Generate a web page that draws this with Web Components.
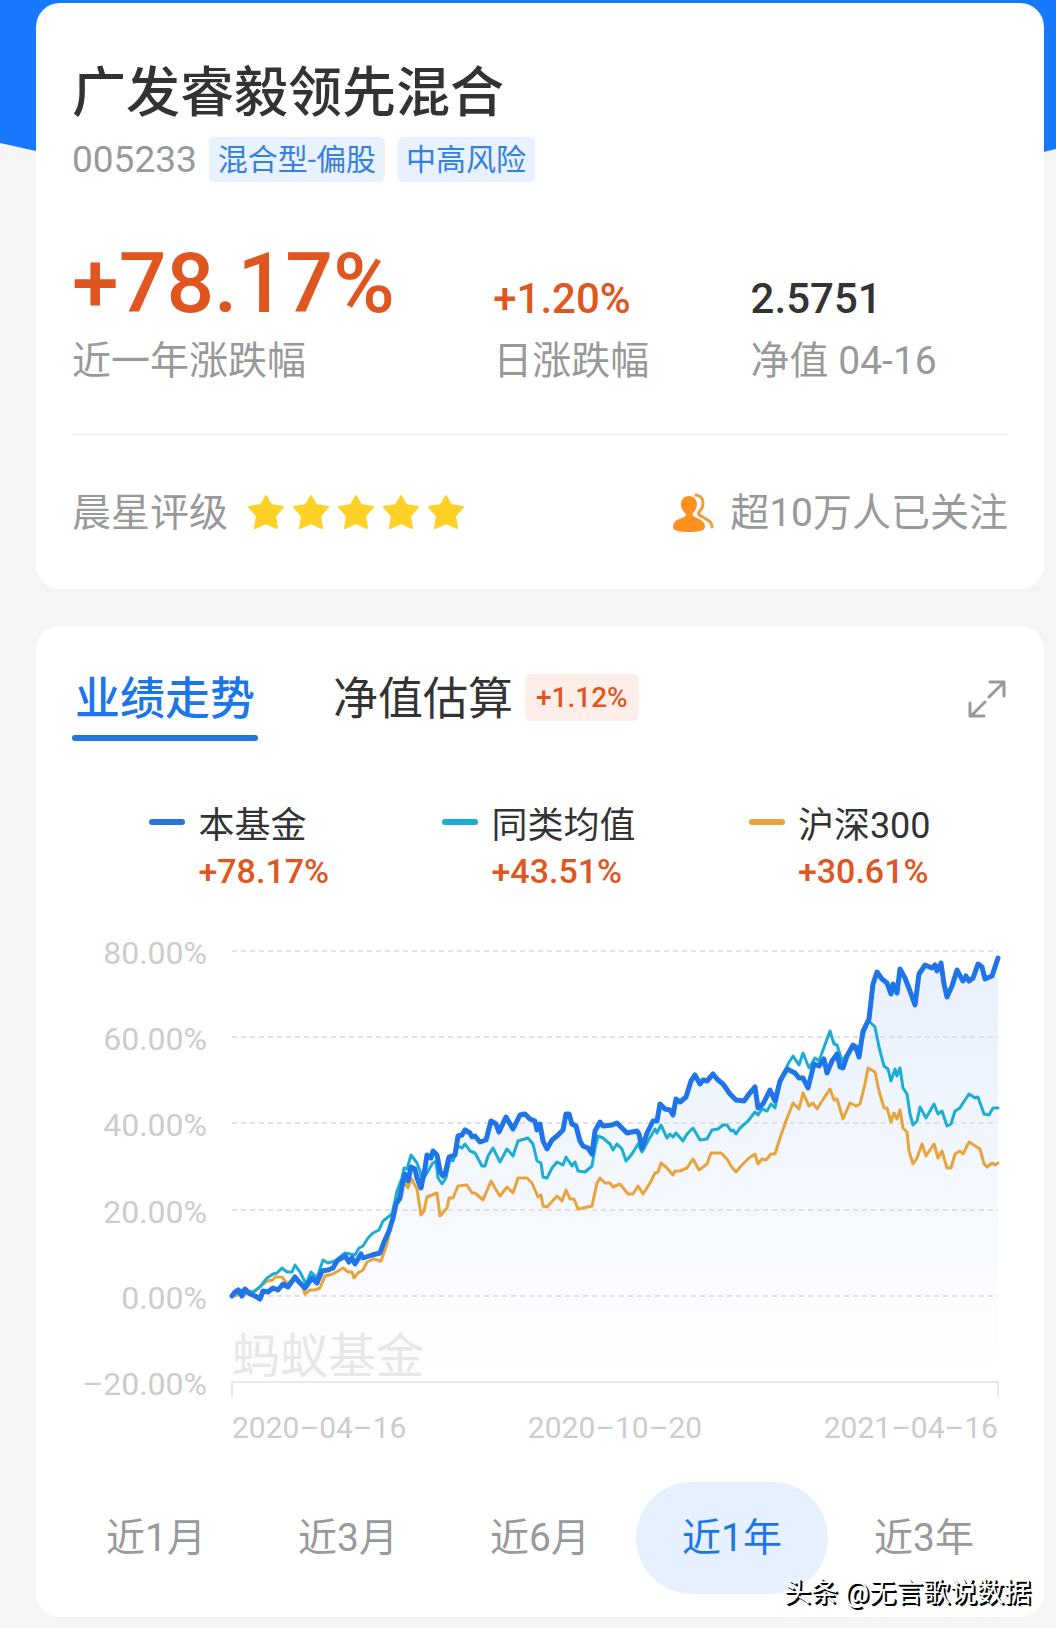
<!DOCTYPE html>
<html lang="zh-CN">
<head>
<meta charset="utf-8">
<meta name="viewport" content="width=device-width, initial-scale=1">
<title>广发睿毅领先混合</title>
<style>
  body {
    margin: 0;
    background: #f5f5f5;
    font-family: Roboto, "Noto Sans CJK SC", sans-serif;
    color: #333;
    --blue: #1b76ea;
    --red: #e05620;
    --grey: #999;
  }
</style>
</head>
<body>
<fund-page>
  <fund-card>
    <fund-heading code="005233">
      广发睿毅领先混合
      <fund-tag slot="tags">混合型-偏股</fund-tag>
      <fund-tag slot="tags">中高风险</fund-tag>
    </fund-heading>
    <metric-row>
      <fund-metric size="big" tone="up" value="+78.17%">近一年涨跌幅</fund-metric>
      <fund-metric tone="up" value="+1.20%">日涨跌幅</fund-metric>
      <fund-metric value="2.5751">净值 04-16</fund-metric>
    </metric-row>
    <rating-row stars="5">
      晨星评级
      <span slot="followers">超10万人已关注</span>
    </rating-row>
  </fund-card>
  <fund-card>
    <trend-tabs>
      <span slot="first">业绩走势</span>
      <span slot="second">净值估算</span>
      <span slot="badge">+1.12%</span>
    </trend-tabs>
    <trend-legend>
      <legend-item color="#2474dc" value="+78.17%">本基金</legend-item>
      <legend-item color="#1cadd4" value="+43.51%">同类均值</legend-item>
      <legend-item color="#e8a33a" value="+30.61%">沪深300</legend-item>
    </trend-legend>
    <trend-chart>蚂蚁基金</trend-chart>
    <range-picker ranges="近1月,近3月,近6月,近1年,近3年" selected="近1年"></range-picker>
  </fund-card>
  <source-mark slot="mark">头条 @无言歌说数据</source-mark>
</fund-page>

<script>
function define(name, html, setup) {
  const template = document.createElement("template");
  template.innerHTML = html;
  customElements.define(name, class extends HTMLElement {
    constructor() {
      super();
      this.attachShadow({ mode: "open" });
      this.shadowRoot.appendChild(template.content.cloneNode(true));
    }

    connectedCallback() {
      if (setup) setup(this, this.shadowRoot);
    }
  });
}

define("fund-page", `
  <style>
    :host { display: grid; position: relative; }
    .backdrop, main { grid-area: 1 / 1; }
    .backdrop {
      height: 200px;
      background: #1677ff;
      clip-path: polygon(0 0, 100% 0, 100% 149px, 80% 200px, 20% 190px, 0 143px);
    }
    main {
      display: flex;
      flex-direction: column;
      gap: 37px;
      min-width: 0;
      padding: 3px 12px 12px 36px;
      z-index: 1;
    }
  </style>
  <div class="backdrop"></div>
  <main><slot></slot></main>
  <slot name="mark"></slot>
`);

define("fund-card", `
  <style>
    :host {
      display: block;
      background: #fff;
      border-radius: 24px;
    }
  </style>
  <slot></slot>
`);

define("fund-heading", `
  <style>
    :host { display: block; padding: 59px 36px 0; }
    h1 {
      margin: 0 0 11px;
      font-size: 54px;
      line-height: 64px;
      font-weight: 500;
    }
    .info { display: flex; align-items: center; gap: 12px; }
    .code { font-size: 37px; line-height: 45px; color: var(--grey); }
  </style>
  <h1><slot></slot></h1>
  <div class="info">
    <span class="code"></span>
    <slot name="tags"></slot>
  </div>
`, (host, root) => {
  root.querySelector(".code").textContent = host.getAttribute("code");
});

define("fund-tag", `
  <style>
    :host {
      display: block;
      padding: 0 9px;
      border-radius: 6px;
      background: #e8f1fe;
      color: #3580dc;
      font-size: 30px;
      line-height: 45px;
    }
  </style>
  <slot></slot>
`);

define("metric-row", `
  <style>
    :host {
      display: grid;
      grid-template-columns: 18fr 11fr 11fr;
      align-items: end;
      margin: 60px 36px 0;
      padding-bottom: 49px;
      border-bottom: 1px solid #f0f0f0;
    }
  </style>
  <slot></slot>
`);

define("fund-metric", `
  <style>
    :host { display: flex; flex-direction: column; gap: 11px; white-space: nowrap; }
    .value { font-size: 42px; line-height: 54px; font-weight: 500; }
    .label { font-size: 39px; line-height: 48px; color: var(--grey); }
    :host([size="big"]) .value { font-size: 84px; line-height: 84px; }
    :host([tone="up"]) .value { color: var(--red); }
  </style>
  <span class="value"></span>
  <span class="label"><slot></slot></span>
`, (host, root) => {
  root.querySelector(".value").textContent = host.getAttribute("value");
});

define("rating-row", `
  <style>
    :host {
      display: flex;
      align-items: center;
      justify-content: space-between;
      padding: 54px 36px 52px;
      font-size: 39px;
      line-height: 48px;
      color: var(--grey);
    }
    div { display: flex; align-items: center; }
    .stars { gap: 9px; margin: 0 0 3px 20px; }
    .people { gap: 16px; }
    svg { display: block; }
  </style>
  <div>
    <slot></slot>
    <div class="stars" role="img"></div>
  </div>
  <div class="people">
    <svg width="41" height="40" viewBox="0 0 41 40" aria-hidden="true">
      <path fill="#ff9020" d="M16 3c5 0 8 4 8 8 0 4-2 7-4 9-1 2 0 3 2 4l6 3c3 2 4 4 4 7 0 4-7 5-16 5S0 38 0 34c0-3 1-5 4-7l7-3c2-1 3-2 1-4-2-2-4-5-4-9 0-4 3-8 8-8z"/>
      <path fill="none" stroke="#f39a3c" stroke-width="3" stroke-linecap="round" d="M23 2c5 1 7 4 7 8s-2 7-4 9c-1 2 0 3 2 4l5 3c4 2 6 5 6 8"/>
    </svg>
    <slot name="followers"></slot>
  </div>
`, (host, root) => {
  const count = Number(host.getAttribute("stars"));
  const stars = root.querySelector(".stars");
  stars.setAttribute("aria-label", count + "星");
  stars.innerHTML = `
    <svg width="36" height="36" viewBox="0 0 36 36">
      <path fill="#ffd026" stroke="#ffd026" stroke-width="2" stroke-linejoin="round"
        d="M18 2l5 9 12 2-8 9 2 12-11-5-11 5 2-12-8-9 12-2z"/>
    </svg>`.repeat(count);
});

define("trend-tabs", `
  <style>
    :host { display: flex; align-items: flex-start; padding: 44px 36px 0; }
    button {
      margin: 0;
      border: 0;
      padding: 0;
      background: none;
      font: inherit;
      color: inherit;
      cursor: pointer;
    }
    nav { display: flex; flex: 1; gap: 72px; }
    .tab { padding: 0 3px; font-size: 45px; line-height: 60px; }
    .tab[aria-selected="true"] { padding: 0; font-weight: 500; color: var(--blue); }
    .tab[aria-selected="true"] span { padding: 0 3px; }
    .tab[aria-selected="true"]::after {
      content: "";
      display: block;
      height: 6px;
      margin-top: 5px;
      border-radius: 3px;
      background: #2276de;
    }
    .second { display: flex; align-items: flex-start; gap: 9px; }
    .badge {
      margin-top: 4px;
      padding: 0 11px;
      border-radius: 6px;
      background: #fdeeea;
      color: var(--red);
      font-size: 28px;
      line-height: 47px;
      font-weight: 500;
    }
    .expand { margin: 10px 2px 0 0; }
    svg { display: block; }
  </style>
  <nav role="tablist">
    <button class="tab" role="tab" aria-selected="true"><span><slot name="first"></slot></span></button>
    <div class="second">
      <button class="tab" role="tab" aria-selected="false"><slot name="second"></slot></button>
      <span class="badge"><slot name="badge"></slot></span>
    </div>
  </nav>
  <button class="expand" aria-label="全屏">
    <svg width="38" height="38" viewBox="0 0 38 38" fill="none" stroke="#999" stroke-width="3" stroke-linecap="round" stroke-linejoin="round">
      <path d="M21 17L35 3M22 2h14v14M17 22L3 36M2 23v13h14"/>
    </svg>
  </button>
`);

define("trend-legend", `
  <style>
    :host { display: flex; justify-content: space-evenly; padding-top: 63px; }
  </style>
  <slot></slot>
`);

define("legend-item", `
  <style>
    :host {
      display: grid;
      grid-template-columns: 36px auto;
      column-gap: 13px;
      line-height: 45px;
    }
    i { height: 6px; margin-top: 15px; border-radius: 3px; }
    .name { font-size: 36px; }
    .value { grid-column: 2; font-size: 34px; font-weight: 500; color: var(--red); }
  </style>
  <i></i>
  <span class="name"><slot></slot></span>
  <span class="value"></span>
`, (host, root) => {
  root.querySelector("i").style.background = host.getAttribute("color");
  root.querySelector(".value").textContent = host.getAttribute("value");
});

// x runs over the year from 0 to 766, y from 80% at 0 down to -20% at 431
const fundLine = "0,345 3,341 6,339 10,345 13,338 18,343 23,345 28,348 31,340 36,341 41,337 46,339 51,333 56,336 63,326 68,332 73,337 80,327 85,332 90,320 96,319 101,317 105,310 113,305 117,311 120,307 123,313 129,303 131,307 140,304 148,302 152,291 157,280 161,267 164,253 168,247 171,230 173,223 176,230 179,216 183,218 185,227 189,237 193,217 195,204 199,207 201,200 205,204 208,220 211,225 213,223 217,206 223,204 226,185 230,184 233,179 238,182 240,186 243,185 248,191 254,189 259,170 264,173 267,181 274,166 281,178 288,164 293,163 298,168 303,170 305,179 308,173 311,190 315,198 320,189 325,185 331,179 334,163 337,163 340,173 344,175 348,190 351,195 356,197 360,203 363,180 368,171 371,175 380,174 385,172 390,177 395,182 405,180 407,183 410,197 415,182 421,170 425,170 428,153 433,158 438,159 441,164 444,148 448,151 454,146 459,130 463,124 468,133 471,129 475,130 481,123 485,128 491,133 498,143 504,149 512,150 517,143 523,136 526,157 531,153 538,139 543,150 548,130 552,123 555,118 563,122 567,127 571,127 576,137 582,113 587,115 592,108 595,122 600,110 605,103 608,116 611,117 615,105 621,94 624,96 627,106 631,80 637,68 641,33 645,21 650,28 655,32 659,43 661,33 665,42 668,18 673,27 678,40 683,54 687,23 693,14 700,17 703,14 705,20 709,12 712,33 715,46 720,35 725,19 731,30 734,25 737,30 741,27 746,13 750,16 753,28 760,25 766,7";
const peerLine = "0,345 8,339 15,340 21,341 28,336 35,327 41,323 45,322 50,317 55,321 60,321 63,314 68,321 74,333 79,321 85,327 91,309 96,312 103,310 113,302 123,304 127,297 131,295 136,287 141,282 147,279 151,270 160,263 165,240 170,227 172,217 175,218 179,204 185,212 188,220 190,230 195,222 200,213 204,210 206,227 210,233 214,227 218,208 221,210 226,195 230,197 233,193 238,200 243,202 250,215 253,215 256,205 261,197 268,211 275,198 281,205 286,190 296,187 301,193 305,210 309,212 311,226 315,227 320,217 325,211 331,214 334,206 340,215 343,211 346,220 353,221 360,215 363,197 366,185 371,187 378,193 381,199 385,193 390,198 394,210 400,203 406,193 410,201 416,190 423,178 425,182 429,174 435,187 438,183 441,186 444,182 451,190 455,183 461,177 468,189 475,188 480,179 486,178 491,174 495,174 499,180 501,179 504,183 508,177 516,170 523,161 526,164 530,158 535,160 539,153 543,157 548,133 556,113 561,105 567,114 571,102 577,117 583,107 587,110 598,80 602,93 605,94 610,110 621,96 627,104 631,84 637,70 643,76 647,96 652,115 656,118 659,130 663,118 665,125 668,117 671,137 675,143 678,163 681,174 685,170 688,156 694,167 702,153 706,163 710,160 715,175 719,173 723,160 728,157 731,152 737,143 743,147 746,146 752,163 757,164 761,157 766,157";
const indexLine = "0,345 21,342 30,334 35,330 41,329 43,326 50,326 55,332 63,329 70,334 73,343 78,339 83,339 88,337 93,325 101,323 111,317 116,321 120,321 122,327 126,322 131,319 135,311 141,308 149,310 155,293 160,270 165,247 171,230 176,237 179,227 185,238 189,264 192,260 195,246 205,242 208,265 215,257 217,247 221,247 226,235 235,234 240,242 243,242 251,249 259,230 263,237 268,245 275,236 281,242 286,227 295,227 300,232 306,246 309,244 311,255 315,256 325,245 330,250 334,239 338,248 342,248 346,258 360,255 365,232 368,227 373,232 378,232 381,236 388,233 396,243 401,243 406,235 411,243 418,232 423,222 426,221 429,212 434,216 441,224 443,220 448,220 455,217 461,208 467,219 475,213 479,202 489,202 495,208 499,215 504,221 509,215 517,207 523,203 526,213 530,208 534,209 539,203 543,203 548,187 554,170 561,152 567,158 571,142 577,155 581,152 585,158 592,147 598,138 602,149 605,148 611,168 618,152 624,155 628,153 633,133 636,117 643,121 647,140 652,157 655,157 659,171 662,162 665,168 668,159 671,177 675,181 677,200 681,213 685,207 690,193 694,205 702,193 706,207 710,200 715,217 719,217 723,203 728,200 731,203 737,191 748,198 752,213 755,216 760,212 763,214 766,212";

define("trend-chart", `
  <style>
    :host {
      display: grid;
      grid-template-columns: 135px 1fr;
      column-gap: 25px;
      row-gap: 11px;
      padding: 57px 46px 0 36px;
      font-size: 32px;
      line-height: 40px;
      color: #ccc;
    }
    /* half a line more above and below, so that each label is centred on its grid line */
    .scale {
      display: flex;
      flex-direction: column;
      justify-content: space-between;
      height: 471px;
      margin: -18px 0 -7px;
      text-align: right;
    }
    .plot { position: relative; min-width: 0; }
    svg { display: block; width: 100%; height: 446px; overflow: visible; }
    svg * { vector-effect: non-scaling-stroke; }
    .grid { stroke: #dfe1e5; stroke-width: 2; stroke-dasharray: 5 4; }
    .axis { fill: none; stroke: #e8e8e8; stroke-width: 2; }
    polyline { fill: none; stroke-width: 3; stroke-linejoin: round; stroke-linecap: round; }
    .brand {
      position: absolute;
      left: 0;
      top: 376px;
      font-size: 48px;
      line-height: 60px;
      color: #e6e7e9;
    }
    .dates {
      grid-column: 2;
      display: flex;
      justify-content: space-between;
      font-size: 30px;
    }
  </style>
  <div class="scale">
    <span>80.00%</span>
    <span>60.00%</span>
    <span>40.00%</span>
    <span>20.00%</span>
    <span>0.00%</span>
    <span>–20.00%</span>
  </div>
  <div class="plot">
    <span class="brand"><slot></slot></span>
    <svg viewBox="0 0 766 446" preserveAspectRatio="none" role="img" aria-label="业绩走势">
      <defs>
        <linearGradient id="fade" x1="0" y1="0" x2="0" y2="1">
          <stop offset="0" stop-color="#1f6fe8" stop-opacity=".1"/>
          <stop offset=".5" stop-color="#1f6fe8" stop-opacity=".055"/>
          <stop offset="1" stop-color="#1f6fe8" stop-opacity="0"/>
        </linearGradient>
      </defs>
      <polygon fill="url(#fade)" points="${fundLine} 766,431 0,431"/>
      <path class="grid" d="M0 0H766M0 86H766M0 172H766M0 259H766M0 345H766"/>
      <path class="axis" d="M0 446V431H766V446"/>
      <polyline stroke="#e8a33a" points="${indexLine}"/>
      <polyline stroke="#1cadd4" points="${peerLine}"/>
      <polyline stroke="#1f74e8" style="stroke-width: 5" points="${fundLine}"/>
    </svg>
  </div>
  <div class="dates">
    <span>2020–04–16</span>
    <span>2020–10–20</span>
    <span>2021–04–16</span>
  </div>
`);

define("range-picker", `
  <style>
    :host {
      display: grid;
      grid-template-columns: repeat(5, 1fr);
      padding: 34px 24px 23px;
    }
    button {
      margin: 0;
      border: 0;
      padding: 0;
      border-radius: 56px;
      background: none;
      font: inherit;
      font-size: 39px;
      line-height: 112px;
      color: var(--grey);
      cursor: pointer;
    }
    button[aria-pressed="true"] { background: #e7f0fe; color: var(--blue); }
  </style>
`, (host, root) => {
  host.getAttribute("ranges").split(",").forEach(range => {
    const button = document.createElement("button");
    button.textContent = range;
    button.setAttribute("aria-pressed", range === host.getAttribute("selected"));
    button.addEventListener("click", () => {
      root.querySelectorAll("button").forEach(b => b.setAttribute("aria-pressed", b === button));
    });
    root.appendChild(button);
  });
});

define("source-mark", `
  <style>
    :host {
      position: absolute;
      right: 25px;
      bottom: 16px;
      z-index: 2;
      font-size: 27px;
      line-height: 40px;
      color: #fff;
      text-shadow: 1px 1px 0 #000, 2px 2px 0 #000;
    }
  </style>
  <slot></slot>
`);
</script>
</body>
</html>
